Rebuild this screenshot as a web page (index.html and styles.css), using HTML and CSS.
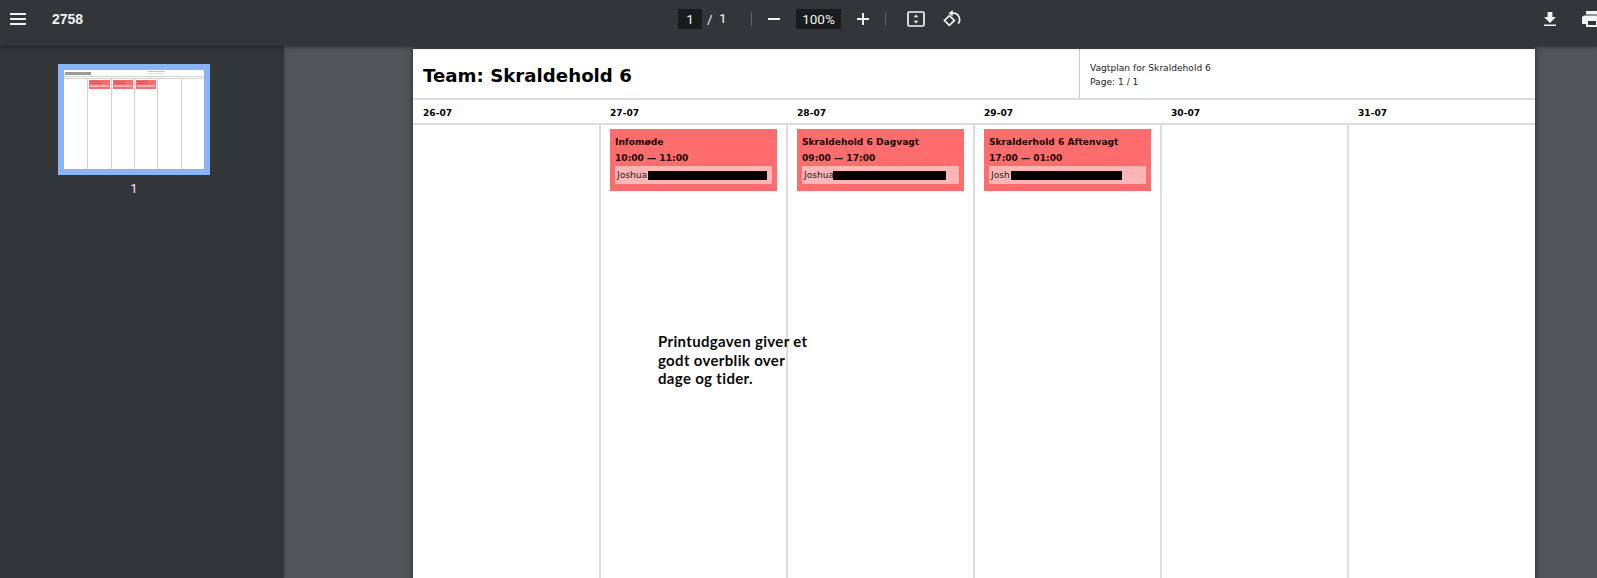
FILE: index.html
```html
<!DOCTYPE html>
<html lang="da">
<head>
<meta charset="utf-8">
<title>2758</title>
<link rel="stylesheet" href="styles.css">
</head>
<body>
<header class="toolbar">
  <svg class="menu-icon" width="16" height="12" viewBox="0 0 16 12"><path d="M0 0h16v2H0zM0 5h16v2H0zM0 10h16v2H0z" fill="#f1f3f4"/></svg>
  <span class="doc-title">2758</span>
  <div class="page-input">1</div>
  <span class="page-slash">/</span>
  <span class="page-total">1</span>
  <span class="sep sep-a"></span>
  <svg class="zoom-out" width="12" height="2" viewBox="0 0 12 2"><path d="M0 0h12v2H0z" fill="#f1f3f4"/></svg>
  <div class="zoom-input">100%</div>
  <svg class="zoom-in" width="12" height="12" viewBox="0 0 12 12"><path d="M5 0h2v5h5v2H7v5H5V7H0V5h5z" fill="#f1f3f4"/></svg>
  <span class="sep sep-b"></span>
  <svg class="fit-icon" width="18" height="16" viewBox="0 0 18 16"><rect x="1" y="1" width="16" height="14" rx="1.2" fill="none" stroke="#f1f3f4" stroke-width="1.7"/><path d="M9 3.4l2.2 2.8H6.8zM9 12.6l2.2-2.8H6.8z" fill="#f1f3f4"/></svg>
  <svg class="rotate-icon" width="18" height="17" viewBox="0 0 18 17"><path d="M6.4 5.6L1.4 10.4l5 5 5-5z" fill="none" stroke="#f1f3f4" stroke-width="1.7"/><path d="M9 3.2h1.2a6.4 6.4 0 0 1 5 10.4" fill="none" stroke="#f1f3f4" stroke-width="1.7"/><path d="M9.6 0L5.6 3.2l4 3.2z" fill="#f1f3f4"/></svg>
  <svg class="download-icon" width="12" height="14" viewBox="0 0 12 14"><path d="M3.6 0h4.8v5H12L6 11 0 5h3.6zM0 12.4h12V14H0z" fill="#f1f3f4"/></svg>
  <svg class="print-icon" width="20" height="16" viewBox="0 0 20 16"><path d="M4 0h12v3.5H4zM2.5 4.5h15A2.5 2.5 0 0 1 20 7v6h-4v3H4v-3H0V7a2.5 2.5 0 0 1 2.5-2.5zM6 10v4h8v-4z" fill="#f1f3f4"/></svg>
</header>
<div class="workspace">
  <aside class="sidebar">
    <div class="thumb">
      <div class="thumb-page">
        <div class="thumb-head"><div class="thumb-title"></div><div class="thumb-meta"></div></div>
        <div class="thumb-days"></div>
        <div class="thumb-cols">
          <div class="thumb-col"></div>
          <div class="thumb-col"><div class="thumb-card"><div class="thumb-text"></div><div class="thumb-text"></div><div class="thumb-person"></div></div></div>
          <div class="thumb-col"><div class="thumb-card"><div class="thumb-text"></div><div class="thumb-text"></div><div class="thumb-person"></div></div></div>
          <div class="thumb-col"><div class="thumb-card"><div class="thumb-text"></div><div class="thumb-text"></div><div class="thumb-person"></div></div></div>
          <div class="thumb-col"></div>
          <div class="thumb-col"></div>
        </div>
      </div>
    </div>
    <div class="thumb-num">1</div>
  </aside>
  <main class="viewer">
    <article class="page">
      <div class="page-head">
        <h1 class="team">Team: Skraldehold 6</h1>
        <div class="meta">
          <div>Vagtplan for Skraldehold 6</div>
          <div>Page: 1 / 1</div>
        </div>
      </div>
      <div class="days">
        <div class="day">26-07</div>
        <div class="day">27-07</div>
        <div class="day">28-07</div>
        <div class="day">29-07</div>
        <div class="day">30-07</div>
        <div class="day">31-07</div>
      </div>
      <div class="columns">
        <div class="column"></div>
        <div class="column">
          <div class="card">
            <div class="card-line">Infomøde</div>
            <div class="card-line">10:00 — 11:00</div>
            <div class="person">Joshua<span class="redact r1"></span></div>
          </div>
        </div>
        <div class="column">
          <div class="card">
            <div class="card-line">Skraldehold 6 Dagvagt</div>
            <div class="card-line">09:00 — 17:00</div>
            <div class="person">Joshua<span class="redact r2"></span></div>
          </div>
        </div>
        <div class="column">
          <div class="card">
            <div class="card-line">Skralderhold 6 Aftenvagt</div>
            <div class="card-line">17:00 — 01:00</div>
            <div class="person">Josh<span class="redact r3"></span></div>
          </div>
        </div>
        <div class="column"></div>
        <div class="column"></div>
      </div>
      <p class="note">Printudgaven giver et<br>godt overblik over<br>dage og tider.</p>
    </article>
  </main>
</div>
</body>
</html>
```
FILE: styles.css
```css
* { box-sizing: border-box; }
html, body { margin: 0; height: 100%; overflow: hidden; }
body { display: flex; flex-direction: column; background: #525659; font-family: "DejaVu Sans", sans-serif; }

.toolbar {
  height: 46px; flex: none; display: flex; align-items: center;
  background: #323639; color: #f1f3f4; padding-left: 10px; padding-bottom: 9px;
  position: relative; z-index: 2; box-shadow: 0 1px 4px rgba(0,0,0,.45);
  font-family: Roboto, sans-serif; overflow: hidden;
}
.toolbar > * { flex: none; }
.doc-title { margin-left: 26px; width: 30px; font-size: 14px; font-weight: 700; font-family: "Liberation Sans", sans-serif; }
.page-input { margin-left: 596px; width: 24px; height: 20px; background: #191b1c; text-align: center; font-size: 13.5px; line-height: 20px; }
.page-slash { margin-left: 5px; font-size: 13.5px; width: 7px; }
.page-total { margin-left: 5px; font-size: 13.5px; width: 8px; margin-top: -2px; }
.sep { width: 1px; height: 14px; background: #5f6366; }
.sep-a { margin-left: 24px; }
.zoom-out { margin-left: 16px; }
.zoom-input { margin-left: 16px; width: 45px; height: 20px; background: #191b1c; text-align: center; font-size: 13.5px; line-height: 20px; }
.zoom-in { margin-left: 16px; }
.sep-b { margin-left: 16px; }
.fit-icon { margin-left: 21px; }
.rotate-icon { margin-left: 18px; }
.download-icon { margin-left: 583px; }
.print-icon { margin-left: 26px; }

.workspace { flex: 1; min-height: 0; display: flex; }
.sidebar { width: 284px; flex: none; background: #323639; padding: 18px 0 0 58px; box-shadow: 0 0 4px rgba(0,0,0,.3); }
.thumb { width: 152px; height: 111px; border: 6px solid #8ab4f8; background: #fff; }
.thumb-page { height: 99px; display: flex; flex-direction: column; overflow: hidden; }
.thumb-head { height: 7px; display: flex; flex: none; border-bottom: 1px solid #d4d4d4; }
.thumb-title { width: 83px; height: 3px; margin-top: 2px; flex: none; background: linear-gradient(90deg, #fff 0 1px, #9a9a9a 1px 27px, #fff 27px); }
.thumb-meta { width: 17px; height: 3px; margin: 1px 0 0 1px; border-top: 1px solid #c4c4c4; border-bottom: 1px solid #e0e0e0; }
.thumb-days { height: 2px; flex: none; border-bottom: 1px solid #d4d4d4; }
.thumb-cols { flex: 1; display: grid; grid-template-columns: repeat(6, 1fr); }
.thumb-col { border-left: 1px solid #d0d0d0; padding: 1px 1px 0; }
.thumb-col:first-child { border-left: 0; }
.thumb-card { height: 9px; background: #f56f70; padding: 1px 1px 0; }
.thumb-text { width: 11px; height: 1px; margin-bottom: 1px; background: #c85a5c; }
.thumb-person { height: 2px; margin-top: 1px; background: #fbb1b2; }
.thumb-num { width: 152px; margin-top: 6px; text-align: center; color: #f1f3f4; font: 13px/15px Roboto, sans-serif; }

.viewer { flex: 1; min-width: 0; padding: 3px 0 0 129px; }
.page { position: relative; width: 1122px; height: 800px; background: #fff; box-shadow: 0 0 6px rgba(0,0,0,.55); color: #000; }
.page-head { height: 51px; display: flex; border-bottom: 2px solid #ddd; }
.team { width: 667px; margin: 0; padding: 16px 0 0 10px; border-right: 1px solid #ccc; font-size: 18.2px; line-height: 22px; font-weight: 700; }
.meta { padding: 12px 0 0 10px; font-size: 9.1px; line-height: 14px; color: #222; }
.days { height: 25px; display: grid; grid-template-columns: repeat(6, 187px); border-bottom: 2px solid #ddd; }
.day { padding: 7px 0 0 10px; font-size: 9.1px; line-height: 12px; font-weight: 700; }
.columns { display: grid; grid-template-columns: repeat(6, 187px); height: 724px; }
.column { margin-left: -1px; padding: 4px 0 0 9px; border-left: 2px solid #ddd; }
.column:first-child { margin-left: 0; border-left: 0; }
.card { width: 167px; height: 62px; background: #fe6d6e; padding: 5px 5px 0; }
.card-line { font-size: 9.1px; line-height: 16px; font-weight: 700; color: #200; }
.person { height: 18px; padding-left: 2px; background: #feb5b6; border-radius: 1px; font-size: 9.1px; line-height: 18px; color: #222; display: flex; }
.redact { height: 9px; margin: 5px 0 0 1px; background: #000; flex: none; }
.r1 { width: 119px; }
.r2 { width: 113px; margin-left: -1px; }
.r3 { width: 111px; }
.note { position: absolute; left: 245px; top: 283px; margin: 0; font: 700 15px/18.7px Lato, sans-serif; letter-spacing: .33px; color: #0a0a0a; }
```
